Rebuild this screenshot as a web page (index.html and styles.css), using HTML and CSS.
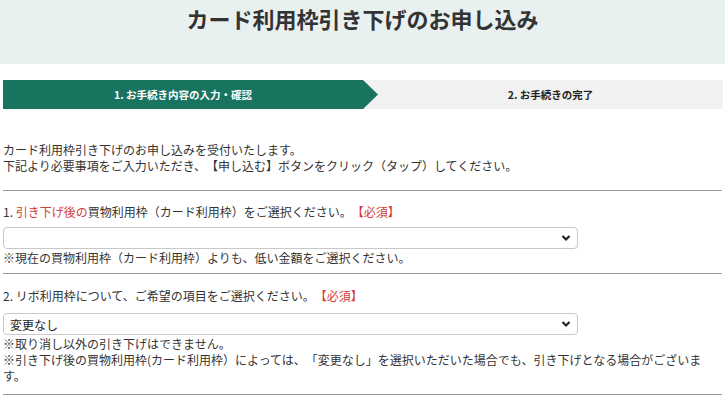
FILE: index.html
```html
<!DOCTYPE html>
<html lang="ja">
<head>
<meta charset="utf-8">
<link rel="stylesheet" href="styles.css">
</head>
<body>
<header class="page-header">
  <h1 class="title">カード利用枠引き下げのお申し込み</h1>
</header>
<div class="steps">
  <div class="step step-current">1. お手続き内容の入力・確認</div>
  <div class="step step-next">2. お手続きの完了</div>
</div>
<main class="content">
  <p class="intro">カード利用枠引き下げのお申し込みを受付いたします。<br>下記より必要事項をご入力いただき、【申し込む】ボタンをクリック（タップ）してください。</p>
  <hr class="rule rule-first">
  <section class="question q1">
    <p class="label">1. <span class="red">引き下げ後の</span>買物利用枠（カード利用枠）をご選択ください。<span class="red req">【必須】</span></p>
    <div class="select-wrap">
      <select class="select"><option></option></select>
      <svg class="chev" width="10" height="8" viewBox="0 0 10 8"><path d="M1.5 2 L5 5.5 L8.5 2" fill="none" stroke="#222" stroke-width="2.2"/></svg>
    </div>
    <p class="note">※現在の買物利用枠（カード利用枠）よりも、低い金額をご選択ください。</p>
  </section>
  <hr class="rule">
  <section class="question q2">
    <p class="label">2. リボ利用枠について、ご希望の項目をご選択ください。<span class="red req">【必須】</span></p>
    <div class="select-wrap">
      <select class="select"><option>変更なし</option></select>
      <svg class="chev" width="10" height="8" viewBox="0 0 10 8"><path d="M1.5 2 L5 5.5 L8.5 2" fill="none" stroke="#222" stroke-width="2.2"/></svg>
    </div>
    <p class="note">※取り消し以外の引き下げはできません。<br>※引き下げ後の買物利用枠(カード利用枠）によっては、「変更なし」を選択いただいた場合でも、引き下げとなる場合がございます。</p>
  </section>
  <hr class="rule">
</main>
</body>
</html>
```

FILE: styles.css
```css
* { box-sizing: border-box; }
html, body { margin: 0; padding: 0; background: #fff; }
body {
  font-family: "Noto Sans CJK JP", "Noto Sans", sans-serif;
  color: #333;
  font-size: 12px;
  line-height: 16px;
  text-spacing-trim: space-all;
  font-feature-settings: "palt" 0, "halt" 0;
}
.page-header {
  background: #e9f1f0;
  height: 64px;
  padding-top: 3px;
}
.title {
  margin: 0;
  text-align: center;
  font-size: 22px;
  line-height: 30px;
  font-weight: 700;
  color: #333;
}
.steps {
  display: flex;
  margin: 16px 2px 0 3px;
  height: 29px;
  background: #f2f2f2;
}
.step {
  font-size: 10.5px;
  font-weight: 700;
  line-height: 29px;
  text-align: center;
}
.step-current {
  width: 375px;
  padding-right: 15px;
  background: #18735f;
  color: #fff;
  clip-path: polygon(0 0, calc(100% - 15px) 0, 100% 50%, calc(100% - 15px) 100%, 0 100%);
}
.step-next {
  flex: 1;
  color: #222;
}
.content {
  padding: 0 3px;
}
p { margin: 0; }
.intro { margin-top: 33px; }
.rule {
  border: 0;
  border-top: 1px solid #9a9a9a;
  margin: 0;
  height: 0;
}
.rule-first { margin-top: 16px; }
.label { margin-top: 13px; }
.q2 .label { margin-top: 14px; }
.red { color: #d23c3c; }
.select-wrap {
  position: relative;
  width: 575px;
  margin-top: 7px;
}
.q2 .select-wrap { margin-top: 9px; }
.select {
  display: block;
  width: 100%;
  height: 22px;
  appearance: none;
  -webkit-appearance: none;
  border: 1px solid #c8c8c8;
  border-radius: 4px;
  background: #fff;
  font-family: "Noto Sans CJK JP", "Noto Sans", sans-serif;
  font-size: 12px;
  color: #222;
  padding: 0 6px;
  margin: 0;
}
.chev {
  position: absolute;
  right: 7px;
  top: 7px;
}
.note { margin-top: 1px; }
.q1 .note { margin-bottom: 7px; }
.q2 .note { margin-bottom: 10px; }
```
